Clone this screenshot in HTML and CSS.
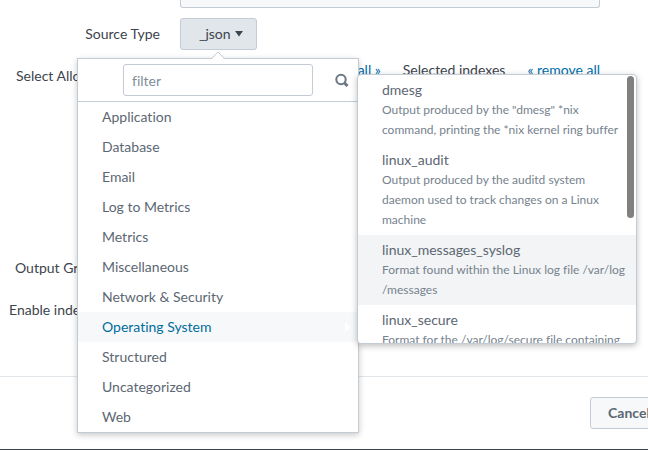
FILE: index.html
```html
<!DOCTYPE html>
<html lang="en">
<head>
<meta charset="utf-8">
<title>Input settings</title>
<link rel="stylesheet" href="styles.css">
</head>
<body>
<form class="page">
  <div class="fields">
    <div class="row row-name">
      <span class="label"></span>
      <input class="readonly" type="text" aria-label="Name" readonly>
    </div>
    <div class="row row-type">
      <label class="label" for="source-type">Source Type</label>
      <button class="button toggle" id="source-type" type="button">_json
        <svg class="caret" viewBox="0 0 8 6" aria-hidden="true"><path d="M0 0h8L4 5.5z"/></svg>
      </button>
    </div>
    <div class="row row-indexes">
      <span class="label label-indexes">Select Allo</span>
      <div class="index-heads">
        <a href="#add">add all »</a>
        <span class="selected">Selected indexes</span>
        <a href="#remove">« remove all</a>
      </div>
    </div>
    <div class="row row-group"><span class="label label-group">Output Gro</span></div>
    <div class="row row-ack"><span class="label label-ack">Enable inde</span></div>
  </div>
  <footer class="footer"><button class="button cancel" type="button">Cancel</button></footer>

  <div class="menu">
    <svg class="arrow" viewBox="0 0 16 9" aria-hidden="true"><path class="arrow-fill" d="M1 9 8 1.500l7 7.500z"/><path class="arrow-line" d="M1 8 8 1 15 8"/></svg>
    <div class="search">
      <input class="filter" type="text" placeholder="filter" aria-label="filter">
      <svg class="glass" viewBox="0 0 14 14" aria-hidden="true"><circle cx="6" cy="6.500" r="4.700"/><path d="M9.500 10l3 3"/></svg>
    </div>
    <ul class="categories">
      <li>Application</li>
      <li>Database</li>
      <li>Email</li>
      <li>Log to Metrics</li>
      <li>Metrics</li>
      <li>Miscellaneous</li>
      <li>Network &amp; Security</li>
      <li class="active">Operating System<svg class="more" viewBox="0 0 5 10" aria-hidden="true"><path d="M0 0l5 5-5 5z"/></svg></li>
      <li>Structured</li>
      <li>Uncategorized</li>
      <li>Web</li>
    </ul>
  </div>

  <div class="submenu">
    <ul class="types">
      <li><span class="name">dmesg</span><span class="about">Output produced by the "dmesg" *nix<br>command, printing the *nix kernel ring buffer</span></li>
      <li><span class="name">linux_audit</span><span class="about">Output produced by the auditd system<br>daemon used to track changes on a Linux<br>machine</span></li>
      <li class="hover"><span class="name">linux_messages_syslog</span><span class="about">Format found within the Linux log file /var/log<br>/messages</span></li>
      <li><span class="name">linux_secure</span><span class="about">Format for the /var/log/secure file containing</span></li>
    </ul>
    <span class="thumb"></span>
  </div>
</form>
</body>
</html>
```
FILE: styles.css
```css
* { box-sizing: border-box; }
body {
  margin: 0;
  background: #fff;
  color: #3c444d;
  font: 14px/20px Lato, "Liberation Sans", sans-serif;
  font-variant-ligatures: none;
}
a { color: #006eaa; text-decoration: none; }
ul { margin: 0; padding: 0; list-style: none; }
.page {
  position: relative;
  min-height: 100vh;
  overflow: hidden;
  border-bottom: 1px solid #3c444d;
}
.fields { padding-right: 48px; }
.row { display: grid; grid-template-columns: 160px 1fr; column-gap: 20px; align-items: start; }
.label { text-align: right; white-space: nowrap; }
.readonly {
  width: 100%;
  height: 8px;
  border: 1px solid #c3cbd4;
  border-top: 0;
  border-radius: 0 0 3px 3px;
  background: #f7f8fa;
}
.row-type { margin-top: 10px; }
.row-type .label { padding-top: 6px; }
.button {
  height: 32px;
  border: 1px solid #c3cbd4;
  border-radius: 3px;
  background: #f7f8fa;
  color: #5c6773;
  font: inherit;
}
.toggle {
  justify-self: start;
  display: flex;
  align-items: center;
  gap: 4px;
  padding: 0 13px 0 18px;
  background: #e1e6eb;
  color: #3c444d;
}
.caret { width: 8px; height: 6px; fill: #3c444d; }
.row-indexes { margin-top: 10px; min-height: 198px; }
.row-indexes .label { padding-top: 6px; }
.label-indexes { text-align: left; padding-left: 16px; }
.label-group { text-align: left; padding-left: 15px; }
.label-ack { text-align: left; padding-left: 9px; }
.index-heads { display: flex; justify-content: flex-end; gap: 22px; }
.row-ack { margin-top: 22px; }
.footer {
  display: flex;
  justify-content: flex-end;
  margin-top: 56px;
  padding-top: 20px;
  border-top: 1px solid #e1e6eb;
}
.cancel { width: 78px; margin-right: -20px; font-weight: 700; }

.menu {
  position: absolute;
  top: 58px;
  left: 77px;
  width: 282px;
  border: 1px solid #c3cbd4;
  background: #fff;
  color: #5c6773;
  box-shadow: 0 2px 6px rgba(0, 0, 0, .22);
}
.arrow { position: absolute; top: -8px; left: 132px; width: 16px; height: 9px; }
.arrow-fill { fill: #fff; }
.arrow-line { fill: none; stroke: #c3cbd4; }
.search {
  display: flex;
  align-items: center;
  justify-content: space-between;
  padding: 5px 9px 5px 45px;
  border-bottom: 1px solid #c3cbd4;
}
.filter {
  width: 190px;
  height: 32px;
  padding: 0 8px;
  border: 1px solid #c3cbd4;
  border-radius: 3px;
  color: #5c6773;
  font: inherit;
}
.filter::placeholder { color: #818d99; }
.glass { width: 14px; height: 14px; fill: none; stroke: #6b7785; stroke-width: 2; }
.glass path { stroke-width: 3; }
.categories li {
  display: flex;
  align-items: center;
  justify-content: space-between;
  padding: 5px 8px 5px 24px;
}
.categories .active { background: #f7f8fa; color: #006d9c; }
.more { width: 5px; height: 10px; fill: #fff; }

.submenu {
  position: absolute;
  top: 74px;
  left: 357px;
  width: 280px;
  height: 270px;
  overflow: hidden;
  border: 1px solid #c3cbd4;
  border-radius: 4px;
  background: #fff;
  color: #5c6773;
  box-shadow: 0 2px 6px rgba(0, 0, 0, .25);
}
.types li { padding: 5px 12px 5px 24px; white-space: nowrap; }
.types .hover { background: #f2f4f5; }
.name, .about { display: block; }
.about { color: #76828e; font-size: 12px; }
.thumb {
  position: absolute;
  top: 1px;
  right: 2px;
  width: 7px;
  height: 142px;
  border-radius: 4px;
  background: #808080;
}
```
